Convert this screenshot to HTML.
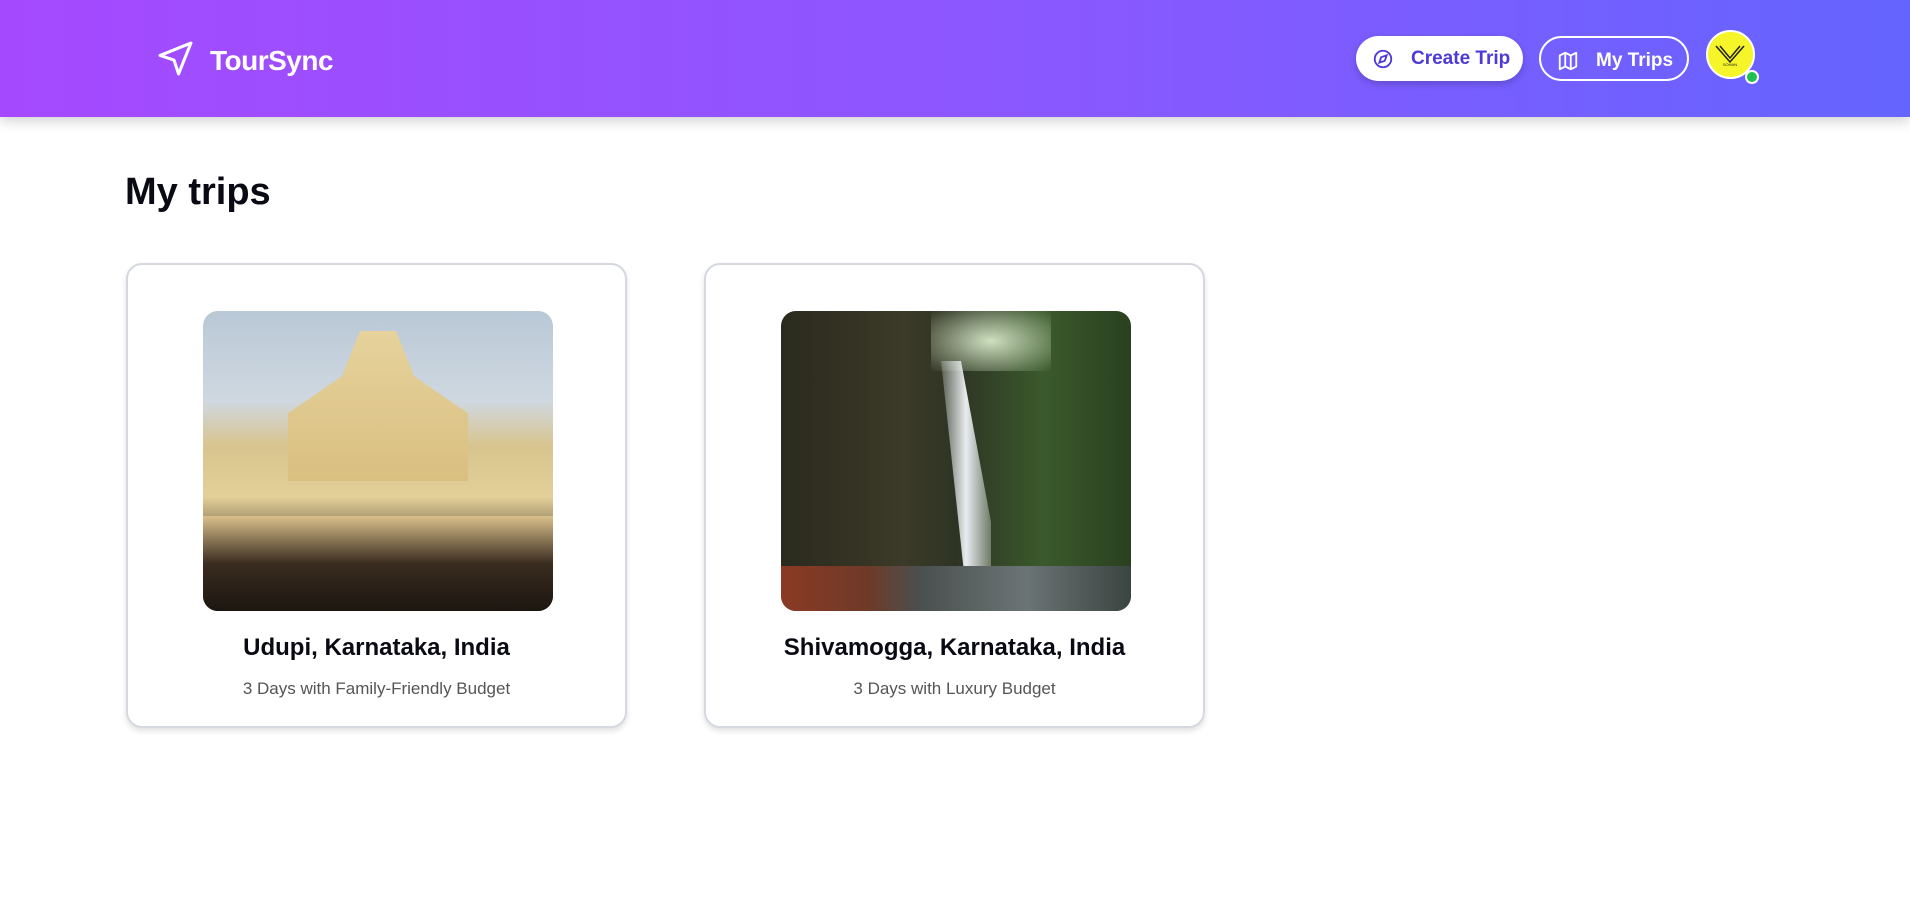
<!DOCTYPE html>
<html><head><meta charset="utf-8"><style>
*{margin:0;padding:0;box-sizing:border-box}
body{width:1910px;height:922px;background:#fff;font-family:"Liberation Sans",sans-serif;position:relative;overflow:hidden}
.hdr{position:absolute;left:0;top:0;width:1910px;height:117px;background:linear-gradient(90deg,#a549ff,#8a58ff 55%,#6464ff);box-shadow:0 4px 12px rgba(0,0,0,.18)}
.logo{position:absolute;left:157px;top:40px}
.brand{position:absolute;left:210px;top:45px;color:#fff;font-weight:bold;font-size:28px;letter-spacing:-0.5px}
.btn{position:absolute;top:36px;height:45px;border-radius:23px;font-size:19px;font-weight:bold;display:flex;align-items:center}
.b1{left:1356px;width:167px;background:#fff;color:#4b3ad8;box-shadow:0 3px 8px rgba(0,0,0,.2)}
.b2{left:1539px;width:150px;border:2px solid #fff;color:#fff}
.btn svg{position:absolute;left:16px;top:12px}
.btn span{position:absolute;left:55px;top:12px}
.av{position:absolute;left:1706px;top:30px;width:49px;height:49px;border-radius:50%;background:#f5f52a;border:2px solid #fff}
.dot{position:absolute;left:1745px;top:70px;width:14px;height:14px;border-radius:50%;background:#1fc24f;border:2px solid #fff}
h1{position:absolute;left:125px;top:171px;font-size:38px;font-weight:bold;color:#0a0a14}
.card{position:absolute;top:263px;width:501px;height:465px;border:2px solid #d5d8df;border-radius:16px;box-shadow:0 3px 6px rgba(0,0,0,.12)}
.img{position:absolute;left:75px;top:46px;width:350px;height:300px;border-radius:15px;overflow:hidden}
.t{position:absolute;left:0;width:100%;text-align:center;top:369px;font-size:24px;font-weight:bold;color:#0a0a14}
.s{position:absolute;left:0;width:100%;text-align:center;top:414px;font-size:17px;color:#555}
</style></head><body>
<div class="hdr">
<svg class="logo" width="37" height="37" viewBox="0 0 24 24" fill="none" stroke="#fff" stroke-width="2" stroke-linejoin="round" stroke-linecap="round"><path d="M22 2 2 10l9 3 3 9z"/></svg>
<div class="brand">TourSync</div>
<div class="btn b1"><svg width="22" height="22" viewBox="0 0 24 24" fill="none" stroke="#4b3ad8" stroke-width="2"><circle cx="12" cy="12" r="9"/><path d="M16 8l-2 6-6 2 2-6z"/></svg><span>Create Trip</span></div>
<div class="btn b2"><svg width="22" height="22" viewBox="0 0 24 24" fill="none" stroke="#fff" stroke-width="2" stroke-linejoin="round"><path d="M3 6l6-3 6 3 6-3v15l-6 3-6-3-6 3z M9 3v15 M15 6v15"/></svg><span>My Trips</span></div>
<div class="av"><svg width="45" height="45" viewBox="0 0 45 45"><path d="M8 14l14 16 14-16M12 14l10 12 10-12" stroke="#222" stroke-width="1.5" fill="none"/><text x="22" y="34" font-size="4" text-anchor="middle" fill="#222">SOHAN</text></svg></div>
<div class="dot"></div>
</div>
<h1>My trips</h1>
<div class="card" style="left:126px">
<div class="img" style="background:linear-gradient(180deg,#b9c8d6 0%,#cfd8e0 30%,#d8c48e 45%,#e3cf98 62%,#5a4a38 80%,#2a2018 100%)">
<div style="position:absolute;left:85px;top:20px;width:180px;height:150px;background:linear-gradient(#e6d29c,#d9bf80);clip-path:polygon(40% 0,60% 0,70% 30%,100% 55%,100% 100%,0 100%,0 55%,30% 30%)"></div>
<div style="position:absolute;left:0;top:205px;width:350px;height:95px;background:linear-gradient(#d9c08a,#3a2c20 50%,#1c1610)"></div>
</div>
<div class="t">Udupi, Karnataka, India</div>
<div class="s">3 Days with Family-Friendly Budget</div>
</div>
<div class="card" style="left:704px">
<div class="img" style="background:linear-gradient(90deg,#2a2a1e 0%,#3c3a28 35%,#2e3424 50%,#3a5a2c 75%,#2a4020 100%)">
<div style="position:absolute;left:150px;top:0;width:120px;height:60px;background:radial-gradient(#cfe0c0,rgba(120,160,90,0))"></div>
<div style="position:absolute;left:160px;top:50px;width:50px;height:230px;background:linear-gradient(90deg,rgba(255,255,255,.2),#e8ecef,rgba(255,255,255,.3));clip-path:polygon(0 0,40% 0,100% 70%,100% 100%,50% 100%,30% 60%)"></div>
<div style="position:absolute;left:0;top:255px;width:350px;height:45px;background:linear-gradient(90deg,#8a3a24 0%,#6e3a28 25%,#4a5050 40%,#6b7474 70%,#3a4440)"></div>
</div>
<div class="t">Shivamogga, Karnataka, India</div>
<div class="s">3 Days with Luxury Budget</div>
</div>
</body></html>
